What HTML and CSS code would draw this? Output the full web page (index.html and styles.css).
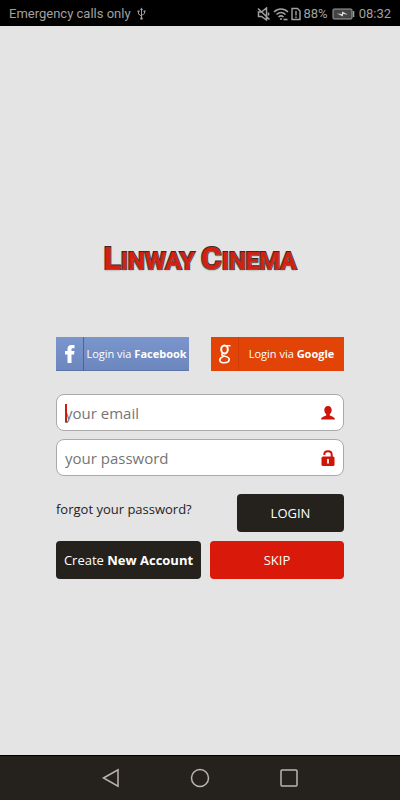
FILE: index.html
```html
<!DOCTYPE html>
<html lang="en">
<head>
    <meta charset="UTF-8">
    <meta name="viewport" content="width=device-width, initial-scale=1.0">
    <title>Linway Cinema</title>
    <link rel="stylesheet" href="styles.css">
</head>
<body>
    <header class="status-bar">
        <div class="status-group left">
            <span>Emergency calls only</span>
            <svg width="9" height="13" viewBox="0 0 9 13" fill="none" stroke="currentColor">
                <path d="M4.500 2v9M1.500 4.500v2.500l3 2M7.500 4.500v2l-3 2"/>
                <path d="M3 3l1.500-2.500L6 3zM.5 3.500h2v1.500h-2zM6.500 3.500h2v1.500h-2z" fill="currentColor" stroke="none"/>
                <circle cx="4.500" cy="11.500" r="1.200" fill="currentColor" stroke="none"/>
            </svg>
        </div>
        <div class="status-group">
            <!-- muted -->
            <svg width="14" height="14" viewBox="0 0 14 14" fill="none" stroke="currentColor" stroke-width="1.500">
                <path d="M1.500 5h3L9.500 1v12L4.500 9.500h-3zM1 1.500l11.500 11M11.500 5.500v3"/>
            </svg>
            <!-- wifi -->
            <svg width="16" height="14" viewBox="0 0 16 14" fill="none" stroke="currentColor" stroke-width="1.600">
                <path d="M1 5c4-4 10-4 14 0M3.500 7.500c3-2.700 6-2.700 9 0M5.500 10c1.500-1.400 3.500-1.400 5 0"/>
                <circle cx="8" cy="12" r="1" fill="currentColor" stroke="none"/>
                <path d="M10.500 12.500h4"/>
            </svg>
            <!-- sim alert -->
            <svg width="10" height="14" viewBox="0 0 10 14" fill="none" stroke="currentColor" stroke-width="1.400">
                <path d="M1 1.500h5.500L9 4v8.500H1zM5 4v4.500M5 9.500V11"/>
            </svg>
            <span>88%</span>
            <!-- battery -->
            <svg class="battery" width="23" height="12" viewBox="0 0 23 12">
                <rect x="1" y="1" width="19" height="10" rx="1" fill="#444" stroke="currentColor"/>
                <path d="M21.500 3v6" stroke="currentColor" stroke-width="1.500"/>
                <path d="M5 5.500l5 .5V3.500L16 6.500l-5-.5v2.500z" fill="#ddd"/>
            </svg>
            <span>08:32</span>
        </div>
    </header>

    <main class="login">
        <h1 class="logo"><span class="cap">L</span>INWAY <span class="cap">C</span>INEMA</h1>

        <div class="social">
            <button type="button" class="social-button facebook">
                <span class="social-icon">
                    <svg width="12" height="20" viewBox="0 0 12 20" fill="#fff">
                        <path d="M3.500 19V10.500H1V7h2.500V5C3.500 2.200 5 1 7.500 1H10.500v3.300H8.700C7.800 4.300 7.500 4.700 7.500 5.500V7h3L10 10.500H7.500V19z"/>
                    </svg>
                </span>
                <span class="social-label">Login via <b>Facebook</b></span>
            </button>
            <button type="button" class="social-button google">
                <span class="social-icon">
                    <svg width="14" height="20" viewBox="0 0 14 20" fill="none" stroke="#fff">
                        <ellipse cx="6.500" cy="5.500" rx="3.300" ry="4" stroke-width="2"/>
                        <path d="M8 1.700h4.500" stroke-width="1.500"/>
                        <path d="M5 9.300c-2 1.200-1.500 2.200.5 2.700 3 .6 5.700 1 5.700 3.500 0 2.200-2.200 3.300-5 3.300-2.600 0-4.400-1-4.400-2.900 0-1.900 1.700-2.900 3.700-3.700" stroke-width="1.600"/>
                    </svg>
                </span>
                <span class="social-label">Login via <b>Google</b></span>
            </button>
        </div>

        <form class="login-form">
            <div class="field">
                <span class="caret"></span>
                <input type="email" id="email" placeholder="your email" aria-label="your email">
                <label for="email">
                    <svg width="14" height="14" viewBox="0 0 14 14" fill="#cf1408">
                        <path d="M7 0C4.500 0 3.300 1.800 3.300 4c0 1.600.7 2.900 1.900 4v1.500C3.500 10.300.5 10.700 0 13.500h14c-.5-2.800-3.500-3.200-5.200-4V8c1.200-1.100 1.900-2.400 1.900-4C10.700 1.800 9.500 0 7 0z"/>
                    </svg>
                </label>
            </div>
            <div class="field">
                <input type="password" id="password" placeholder="your password" aria-label="your password">
                <label for="password">
                    <svg width="14" height="16" viewBox="0 0 14 16">
                        <path d="M3.300 5V4.500c0-4.500 7.400-4.500 7.400 0V7" fill="none" stroke="#cf1408" stroke-width="2"/>
                        <rect x="0.500" y="6.500" width="13" height="9.500" rx="1.500" fill="#cf1408"/>
                        <path d="M7 9v4.500" stroke="#fff" stroke-width="1.800"/>
                    </svg>
                </label>
            </div>
            <div class="form-row">
                <a href="#" class="forgot">forgot your password?</a>
                <button type="submit" class="button login-button">LOGIN</button>
            </div>
            <div class="form-row">
                <button type="button" class="button create-button">Create <b>New Account</b></button>
                <button type="button" class="button skip-button">SKIP</button>
            </div>
        </form>
    </main>

    <nav class="nav-bar">
        <button type="button" aria-label="Back">
            <svg width="18" height="20" viewBox="0 0 18 20"><path d="M1.500 10L16 1.800v16.400z"/></svg>
        </button>
        <button type="button" aria-label="Home">
            <svg width="20" height="20" viewBox="0 0 20 20"><circle cx="10" cy="10" r="8.500"/></svg>
        </button>
        <button type="button" aria-label="Recent apps">
            <svg width="18" height="18" viewBox="0 0 18 18"><rect x="1" y="1" width="16" height="16" rx="1"/></svg>
        </button>
    </nav>
</body>
</html>
```
FILE: styles.css
```css
* {
    box-sizing: border-box;
}
body {
    margin: 0;
    min-height: 100vh;
    display: flex;
    flex-direction: column;
    background-color: #e4e4e4;
    font-family: "Open Sans", "Noto Sans", sans-serif;
    font-size: 13px;
    color: #25221e;
}
button {
    border: none;
    padding: 0;
    font-family: inherit;
    cursor: pointer;
}
svg {
    display: block;
}
.status-bar {
    display: flex;
    justify-content: space-between;
    align-items: center;
    height: 26px;
    padding: 1px 9px 0 9px;
    background-color: #000;
    color: #a0a0a0;
    font-family: Roboto, sans-serif;
    font-size: 13px;
}
.status-group {
    display: flex;
    align-items: center;
    gap: 2px;
}
.status-group.left {
    gap: 6px;
}
.battery {
    margin: 0 2px;
}
.login {
    flex: 1;
    padding: 212px 56px 32px;
}
.logo {
    margin: 0 0 56px;
    text-align: center;
    font-family: Roboto, sans-serif;
    font-size: 24px;
    font-weight: bold;
    line-height: 40px;
    white-space: nowrap;
    color: #d3200f;
    -webkit-text-stroke: 2px #3a2420;
    paint-order: stroke fill;
    text-shadow: 0 1px 2px #777;
}
.logo .cap {
    font-size: 32px;
}
.social {
    display: flex;
    justify-content: space-between;
    margin-bottom: 23px;
}
.social-button {
    display: flex;
    width: 133px;
    height: 34px;
    color: #fff;
    font-size: 11px;
    white-space: nowrap;
}
.social-icon {
    display: flex;
    align-items: center;
    justify-content: center;
    width: 28px;
    height: 34px;
}
.social-label {
    flex: 1;
    line-height: 33px;
    text-align: center;
}
.facebook {
    background: linear-gradient(#7b96cd, #6c87be);
    border-bottom: 1px solid #5d76a9;
}
.facebook .social-icon {
    border-right: 1px solid #4c6599;
}
.google {
    background-color: #e24307;
}
.google .social-icon {
    border-right: 1px solid #d33d05;
}
.field {
    position: relative;
    display: flex;
    align-items: center;
    height: 37px;
    margin-bottom: 8px;
    padding: 0 8px;
    background-color: #fff;
    border: 1px solid #aaa;
    border-radius: 8px;
}
.field input {
    flex: 1;
    min-width: 0;
    padding: 0;
    border: none;
    outline: none;
    background: none;
    font-family: inherit;
    font-size: 15px;
}
.field input::placeholder {
    color: #757575;
}
.field label {
    cursor: pointer;
}
.caret {
    position: absolute;
    left: 8px;
    top: 9px;
    width: 2px;
    height: 18px;
    background-color: #d01c10;
}
.form-row {
    display: flex;
    justify-content: space-between;
    gap: 9px;
    margin-top: 9px;
}
.field + .form-row {
    margin-top: 18px;
}
.forgot {
    line-height: 30px;
    color: inherit;
    text-decoration: none;
}
.button {
    height: 38px;
    border-radius: 4px;
    background-color: #25221e;
    color: #fff;
    font-size: 13px;
}
.login-button {
    width: 107px;
}
.create-button {
    width: 145px;
    white-space: nowrap;
}
.skip-button {
    flex: 1;
    background-color: #d91a0a;
}
.nav-bar {
    display: flex;
    justify-content: center;
    align-items: center;
    gap: 70px;
    height: 45px;
    background-color: #25221e;
    border-top: 1px solid #000;
}
.nav-bar button {
    background: none;
}
.nav-bar svg {
    fill: none;
    stroke: #bbb5ae;
    stroke-width: 1.500;
}
```
